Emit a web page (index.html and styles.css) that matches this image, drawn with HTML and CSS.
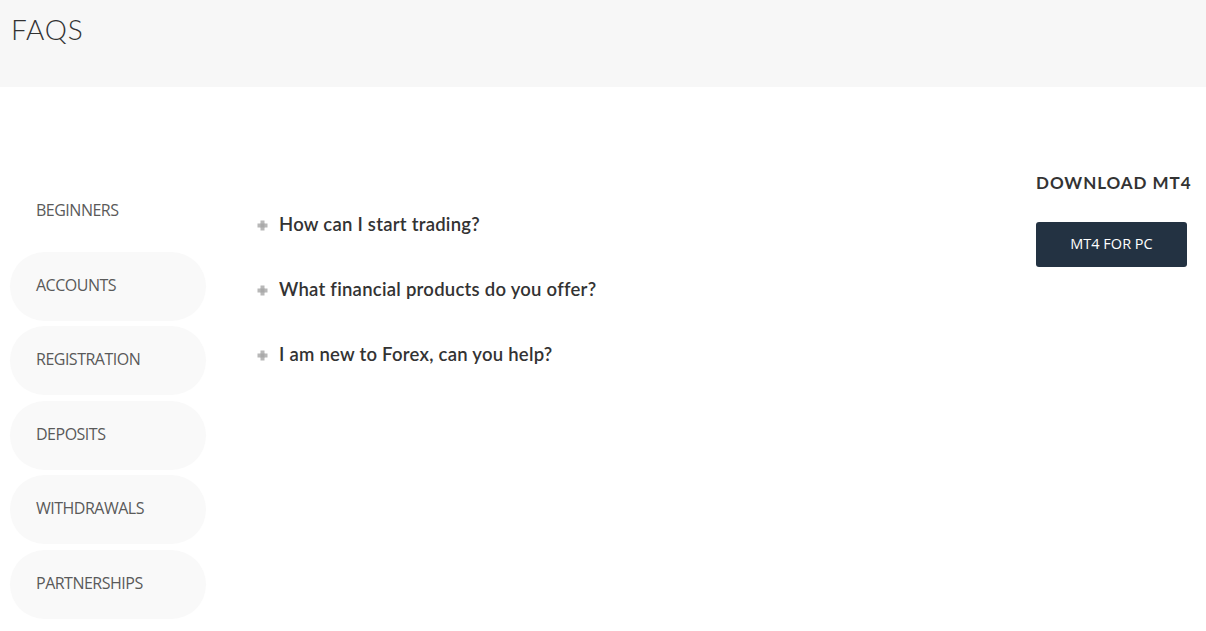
FILE: index.html
```html
<!DOCTYPE html>
<html lang="en">
<head>
<meta charset="utf-8">
<title>FAQs</title>
<link rel="stylesheet" href="styles.css">
</head>
<body>
<header class="page-header">
  <h1 class="page-title">FAQS</h1>
</header>
<main class="faq-main">
  <nav class="faq-nav">
    <a class="nav-item active" href="#">BEGINNERS</a>
    <a class="nav-item" href="#">ACCOUNTS</a>
    <a class="nav-item" href="#">REGISTRATION</a>
    <a class="nav-item" href="#">DEPOSITS</a>
    <a class="nav-item" href="#">WITHDRAWALS</a>
    <a class="nav-item" href="#">PARTNERSHIPS</a>
  </nav>
  <section class="faq-list">
    <div class="faq-q">
      <svg class="plus" width="11" height="11" viewBox="0 0 11 11"><path d="M3.5 0.5h4v3h3v4h-3v3h-4v-3h-3v-4h3z" fill="#b8b8b8"/><rect x="3.5" y="3.5" width="4" height="4" fill="#a9a9a9"/></svg>
      <span>How can I start trading?</span>
    </div>
    <div class="faq-q">
      <svg class="plus" width="11" height="11" viewBox="0 0 11 11"><path d="M3.5 0.5h4v3h3v4h-3v3h-4v-3h-3v-4h3z" fill="#b8b8b8"/><rect x="3.5" y="3.5" width="4" height="4" fill="#a9a9a9"/></svg>
      <span>What financial products do you offer?</span>
    </div>
    <div class="faq-q">
      <svg class="plus" width="11" height="11" viewBox="0 0 11 11"><path d="M3.5 0.5h4v3h3v4h-3v3h-4v-3h-3v-4h3z" fill="#b8b8b8"/><rect x="3.5" y="3.5" width="4" height="4" fill="#a9a9a9"/></svg>
      <span>I am new to Forex, can you help?</span>
    </div>
  </section>
  <aside class="download">
    <h2 class="download-title">DOWNLOAD MT4</h2>
    <a class="download-btn" href="#">MT4 FOR PC</a>
  </aside>
</main>
</body>
</html>
```
FILE: styles.css
```css
html, body {
  margin: 0;
  padding: 0;
  background: #ffffff;
}
body {
  font-family: "Open Sans", "Liberation Sans", sans-serif;
  color: #333333;
}
.page-header {
  background: #f7f7f7;
  height: 87px;
  padding: 0 0 0 11px;
  box-sizing: border-box;
}
.page-title {
  margin: 0;
  padding-top: 11px;
  font-family: "Lato", sans-serif;
  font-weight: 300;
  font-size: 28px;
  line-height: 36px;
  letter-spacing: 0.8px;
  color: #333333;
}
.faq-main {
  display: flex;
  align-items: flex-start;
}
.faq-nav {
  margin: 90px 0 0 10px;
  width: 196px;
  display: flex;
  flex-direction: column;
  gap: 5.6px;
  flex-shrink: 0;
}
.nav-item {
  display: block;
  height: 69px;
  line-height: 67px;
  padding-left: 26px;
  border-radius: 35px;
  background: #f9f9f9;
  color: #5a5a5a;
  font-size: 16px;
  letter-spacing: -0.5px;
  text-decoration: none;
}
.nav-item.active {
  background: transparent;
}
.faq-list {
  margin: 125px 0 0 51px;
  width: 600px;
  display: flex;
  flex-direction: column;
  gap: 41px;
}
.faq-q {
  display: flex;
  align-items: center;
  gap: 11px;
  height: 24px;
  font-family: "Lato", sans-serif;
  font-weight: 600;
  font-size: 18.5px;
  letter-spacing: 0.25px;
  color: #333333;
}
.plus {
  flex-shrink: 0;
  margin-top: 3px;
}
.download {
  margin: 85px 0 0 179px;
  width: 165px;
}
.download-title {
  margin: 0;
  font-family: "Lato", sans-serif;
  font-weight: 700;
  font-size: 17px;
  line-height: 22px;
  letter-spacing: 0.95px;
  color: #333333;
}
.download-btn {
  display: block;
  margin-top: 28px;
  width: 151px;
  height: 45px;
  line-height: 43px;
  text-align: center;
  background: #233242;
  border-radius: 3px;
  color: #ffffff;
  font-size: 14.5px;
  text-decoration: none;
}
```
